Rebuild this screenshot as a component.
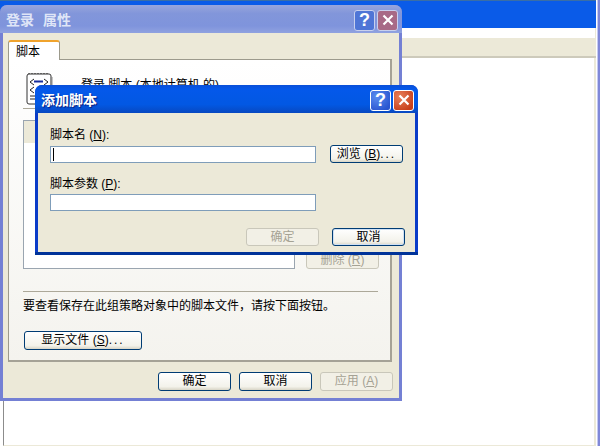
<div class="desk">
  <div class="app">
    <div class="appbar"></div>
    <div class="appgap"></div>
    <div class="apptool"></div>
    <div class="appbody"></div>
  </div>
  <div class="edge"></div>

  <!-- property sheet behind -->
  <div class="win back">
    <div class="title">
      <span class="cap">登录 属性</span>
      <span class="tbtn help">?</span>
      <span class="tbtn close">
        <svg viewBox="0 0 12 12" width="12" height="12"><path d="M1.5 1.5l9 9M10.500 1.5l-9 9" stroke="#fff" stroke-width="2.2" fill="none"/></svg>
      </span>
    </div>
    <div class="body backbody">
      <div class="tabs"><div class="tab">脚本</div></div>
      <div class="panel">
        <div class="head">
          <svg class="scripticon" viewBox="0 0 28 33" width="28" height="33">
            <rect x="1" y="2" width="24" height="30" rx="2" fill="#fff" stroke="#333"/>
            <path d="M3 2v-1M6 2v-1M9 2v-1M12 2v-1M15 2v-1M18 2v-1M21 2v-1" stroke="#222" stroke-width="1"/>
            <path d="M25.5 5v26" stroke="#8a8a8a" stroke-width="2"/>
            <path d="M8 7l-4 3 4 3M18 7l4 3-4 3" stroke="#222" fill="none"/>
            <path d="M8 9.5h9" stroke="#1a2f9c" stroke-width="2"/>
            <path d="M8 15l-4 3 4 3M4 24h18M4 27h18" stroke="#222" fill="none"/>
          </svg>
          <span>登录 脚本 (本地计算机 的)</span>
        </div>
        <div class="rule"></div>
        <div class="listrow">
          <div class="list"><div class="listhead"></div></div>
          <div class="side"><button class="btn off del">删除 (<u>R</u>)</button></div>
        </div>
        <div class="rule lower"></div>
        <p class="note">要查看保存在此组策略对象中的脚本文件，请按下面按钮。</p>
        <button class="btn show">显示文件 (<u>S</u>)<span class="dots">...</span></button>
      </div>
      <div class="actions">
        <button class="btn">确定</button>
        <button class="btn">取消</button>
        <button class="btn off">应用 (<u>A</u>)</button>
      </div>
    </div>
  </div>

  <!-- add script dialog -->
  <div class="win front">
    <div class="title">
      <span class="cap">添加脚本</span>
      <span class="tbtn help">?</span>
      <span class="tbtn close">
        <svg viewBox="0 0 12 12" width="12" height="12"><path d="M1.5 1.5l9 9M10.5 1.5l-9 9" stroke="#fff" stroke-width="2.2" fill="none"/></svg>
      </span>
    </div>
    <div class="body frontbody">
      <span class="lbl">脚本名 (<u>N</u>):</span>
      <div class="inrow">
        <div class="field"><i class="caret"></i></div>
        <button class="btn">浏览 (<u>B</u>)<span class="dots">...</span></button>
      </div>
      <span class="lbl second">脚本参数 (<u>P</u>):</span>
      <div class="field"></div>
      <div class="frontactions">
        <button class="btn off">确定</button>
        <button class="btn default">取消</button>
      </div>
    </div>
  </div>
</div>

<style>
  :global(body) {
    margin: 0;
    background: #fff;
  }

  .desk {
    position: relative;
    display: flex;
    width: 600px;
    height: 446px;
    overflow: hidden;
    font-family: "Liberation Sans", "Noto Sans CJK SC", sans-serif;
    font-size: 12px;
    color: #000;
    background: #fff;
  }

  .app {
    flex: 1;
    margin-right: 1px;
  }

  .edge {
    flex: none;
    width: 2px;
    background: #8088d8;
    border-left: 1px solid #c6caf0;
  }

  .appbar {
    height: 28px;
    background: #0a5be8;
    border-top: 1px solid #3a6ea5;
    box-sizing: border-box;
  }

  .appgap {
    height: 10px;
    border-right: 1px solid #ece9d8;
  }

  .apptool {
    height: 20px;
    background: #ece9d8;
    border-bottom: 2px solid #cdcabb;
    box-sizing: border-box;
  }

  .appbody {
    height: 388px;
    margin-left: 3px;
    border-left: 1px solid #8c8c8c;
    border-right: 2px solid #ece9d8;
    border-bottom: 1px solid #ece9d8;
    box-sizing: border-box;
  }

  .win {
    position: absolute;
    display: flex;
    flex-direction: column;
    box-sizing: border-box;
    border-radius: 7px 7px 0 0;
  }

  .back {
    left: 0;
    top: 5px;
    width: 402px;
    height: 396px;
    background: #7480d4;
  }

  .front {
    left: 35px;
    top: 85px;
    width: 383px;
    height: 170px;
    background: #0a3cc8;
    border-bottom: 3px solid #003399;
  }

  .title {
    height: 28px;
    flex: none;
    display: flex;
    align-items: center;
    gap: 2px;
    padding: 2px 4px 0 6px;
    box-sizing: border-box;
    border-radius: 7px 7px 0 0;
  }

  .back .title {
    background: linear-gradient(#98a5dc, #8296da 30%, #7f94dc 75%, #90a2e0);
  }

  .front .title {
    background: linear-gradient(#0a4fd8, #0458ea 15%, #0258e3 70%, #0848c0);
  }

  .cap {
    flex: 1;
    margin-top: -2px;
    color: #fff;
    font-size: 14px;
    font-weight: 700;
    word-spacing: 5px;
    text-shadow: 1px 1px 1px #0a1f80;
    white-space: pre;
  }

  .back .cap {
    color: #dfe5f7;
    text-shadow: none;
  }

  .tbtn {
    width: 21px;
    height: 21px;
    box-sizing: border-box;
    border: 1px solid #fff;
    border-radius: 3px;
    display: flex;
    align-items: center;
    justify-content: center;
    color: #fff;
    font-size: 18px;
    font-weight: 700;
    line-height: 1;
  }

  .help {
    background: radial-gradient(circle at 30% 30%, #5a8cf0, #2a55d0 80%);
  }

  .close {
    background: radial-gradient(circle at 30% 30%, #e8805a, #c8401c 80%);
  }

  .back .tbtn {
    border-color: #c8d0ee;
  }

  .back .help {
    background: #4f75d6;
  }

  .back .close {
    background: #a86a86;
  }

  .body {
    flex: 1;
    margin: 0 3px 3px;
    background: #ece9d8;
    box-sizing: border-box;
  }

  .front .body {
    margin-bottom: 0;
  }

  .backbody {
    padding: 7px 7px 0 5px;
  }

  .tabs {
    display: flex;
    height: 19px;
    position: relative;
    z-index: 1;
  }

  .tab {
    width: 52px;
    height: 20px;
    box-sizing: border-box;
    padding: 3px 0 0 7px;
    background: #fff;
    border: 1px solid #9c9a8c;
    border-bottom: 0;
    border-top: 2px solid #f0a32c;
    border-radius: 3px 3px 0 0;
    line-height: 14px;
  }

  .panel {
    height: 303px;
    box-sizing: border-box;
    padding: 12px 12px 0 14px;
    background: linear-gradient(#fff, #f4f3ee);
    border: 1px solid #9c9a8c;
    border-right: 2px solid #a5a296;
    border-bottom: 2px solid #a5a296;
  }

  .head {
    display: flex;
    gap: 27px;
    align-items: flex-start;
    padding-left: 3px;
    height: 36px;
  }

  .head span {
    margin-top: 3px;
  }

  .scripticon {
    flex: none;
  }

  .rule {
    height: 1px;
    background: #aca899;
  }

  .listrow {
    display: flex;
    margin-top: 11px;
    gap: 11px;
  }

  .list {
    flex: none;
    width: 272px;
    height: 149px;
    box-sizing: border-box;
    background: #fff;
    border: 1px solid #9aa5b0;
  }

  .listhead {
    height: 22px;
    background: #ece9d8;
  }

  .side {
    display: flex;
    align-items: flex-end;
  }

  .lower {
    margin-top: 22px;
  }

  .note {
    margin: 7px 0 0;
    line-height: 15px;
    white-space: nowrap;
  }

  .btn {
    flex: none;
    width: 73px;
    height: 19px;
    padding: 0;
    box-sizing: border-box;
    font: inherit;
    line-height: 15px;
    color: #000;
    border: 1px solid #003c74;
    border-radius: 3px;
    background: linear-gradient(#fff, #f3f2ea 80%, #d8d5c6);
  }

  .btn.off {
    color: #a5a294;
    border-color: #c9c7ba;
    background: #f2f0e6;
  }

  .dots {
    letter-spacing: 2px;
  }

  .del {
    height: 18px;
  }

  .show {
    display: block;
    width: 118px;
    margin: 17px 0 0 1px;
  }

  .actions {
    display: flex;
    gap: 8px;
    margin: 10px 0 0 150px;
  }

  .frontbody {
    padding: 15px 12px 0 12px;
  }

  .lbl {
    display: block;
    height: 14px;
    line-height: 14px;
  }

  .second {
    margin-top: 14px;
  }

  .inrow {
    display: flex;
    align-items: flex-start;
    gap: 14px;
    margin-top: 3px;
  }

  .inrow .btn {
    height: 18px;
  }

  .field {
    position: relative;
    flex: none;
    width: 266px;
    height: 17px;
    box-sizing: border-box;
    margin-top: 3px;
    background: #fff;
    border: 1px solid #7f9db9;
  }

  .inrow .field {
    margin-top: 1px;
  }

  .caret {
    position: absolute;
    left: 2px;
    top: 1px;
    width: 1px;
    height: 13px;
    background: #000;
  }

  .frontactions {
    display: flex;
    gap: 13px;
    margin: 17px 0 0 196px;
  }

  .frontactions .btn {
    height: 18px;
  }

  .default {
    box-shadow: inset 0 0 0 1px #cfe0f4;
  }

  u {
    text-decoration: underline;
  }
</style>
